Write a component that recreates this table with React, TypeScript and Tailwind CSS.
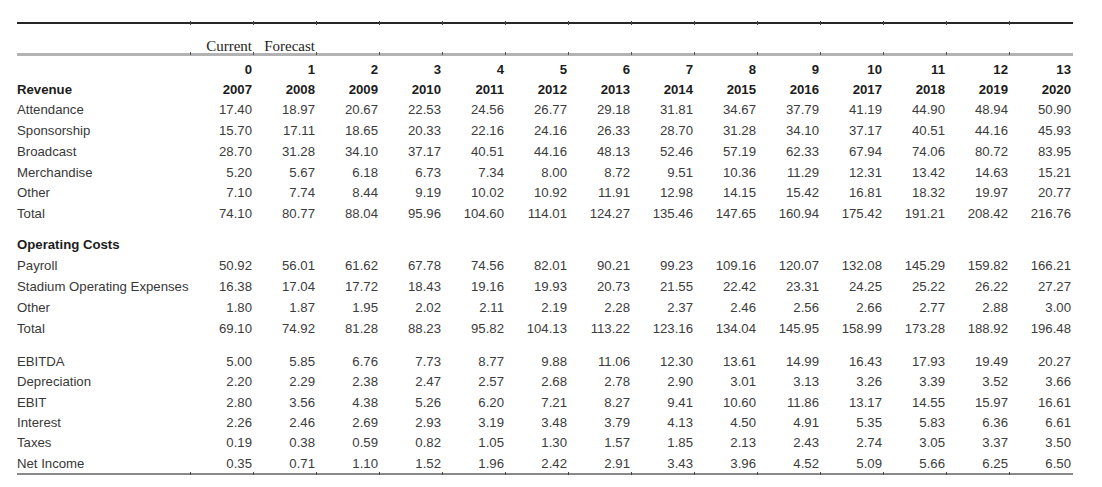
import React from "react"

const GRID = "grid grid-cols-[174px_repeat(14,63px)]"

type Row = { label: string; values: string[] }

const revenue: Row[] = [
  { label: "Attendance", values: ["17.40", "18.97", "20.67", "22.53", "24.56", "26.77", "29.18", "31.81", "34.67", "37.79", "41.19", "44.90", "48.94", "50.90"] },
  { label: "Sponsorship", values: ["15.70", "17.11", "18.65", "20.33", "22.16", "24.16", "26.33", "28.70", "31.28", "34.10", "37.17", "40.51", "44.16", "45.93"] },
  { label: "Broadcast", values: ["28.70", "31.28", "34.10", "37.17", "40.51", "44.16", "48.13", "52.46", "57.19", "62.33", "67.94", "74.06", "80.72", "83.95"] },
  { label: "Merchandise", values: ["5.20", "5.67", "6.18", "6.73", "7.34", "8.00", "8.72", "9.51", "10.36", "11.29", "12.31", "13.42", "14.63", "15.21"] },
  { label: "Other", values: ["7.10", "7.74", "8.44", "9.19", "10.02", "10.92", "11.91", "12.98", "14.15", "15.42", "16.81", "18.32", "19.97", "20.77"] },
  { label: "Total", values: ["74.10", "80.77", "88.04", "95.96", "104.60", "114.01", "124.27", "135.46", "147.65", "160.94", "175.42", "191.21", "208.42", "216.76"] },
]

const costs: Row[] = [
  { label: "Payroll", values: ["50.92", "56.01", "61.62", "67.78", "74.56", "82.01", "90.21", "99.23", "109.16", "120.07", "132.08", "145.29", "159.82", "166.21"] },
  { label: "Stadium Operating Expenses", values: ["16.38", "17.04", "17.72", "18.43", "19.16", "19.93", "20.73", "21.55", "22.42", "23.31", "24.25", "25.22", "26.22", "27.27"] },
  { label: "Other", values: ["1.80", "1.87", "1.95", "2.02", "2.11", "2.19", "2.28", "2.37", "2.46", "2.56", "2.66", "2.77", "2.88", "3.00"] },
  { label: "Total", values: ["69.10", "74.92", "81.28", "88.23", "95.82", "104.13", "113.22", "123.16", "134.04", "145.95", "158.99", "173.28", "188.92", "196.48"] },
]

const income: Row[] = [
  { label: "EBITDA", values: ["5.00", "5.85", "6.76", "7.73", "8.77", "9.88", "11.06", "12.30", "13.61", "14.99", "16.43", "17.93", "19.49", "20.27"] },
  { label: "Depreciation", values: ["2.20", "2.29", "2.38", "2.47", "2.57", "2.68", "2.78", "2.90", "3.01", "3.13", "3.26", "3.39", "3.52", "3.66"] },
  { label: "EBIT", values: ["2.80", "3.56", "4.38", "5.26", "6.20", "7.21", "8.27", "9.41", "10.60", "11.86", "13.17", "14.55", "15.97", "16.61"] },
  { label: "Interest", values: ["2.26", "2.46", "2.69", "2.93", "3.19", "3.48", "3.79", "4.13", "4.50", "4.91", "5.35", "5.83", "6.36", "6.61"] },
  { label: "Taxes", values: ["0.19", "0.38", "0.59", "0.82", "1.05", "1.30", "1.57", "1.85", "2.13", "2.43", "2.74", "3.05", "3.37", "3.50"] },
  { label: "Net Income", values: ["0.35", "0.71", "1.10", "1.52", "1.96", "2.42", "2.91", "3.43", "3.96", "4.52", "5.09", "5.66", "6.25", "6.50"] },
]

const periods = Array.from({ length: 14 }, (_, i) => String(i))
const years = Array.from({ length: 14 }, (_, i) => String(2007 + i))

// horizontal rule with little tick marks at each column boundary
function Rule({ line, tick }: { line: string; tick: string }) {
  return (
    <div className={GRID}>
      {Array.from({ length: 15 }, (_, i) => (
        <div key={i} className={`relative ${line}`}>
          {i < 14 && <span className={`absolute right-0 w-px ${tick}`} />}
        </div>
      ))}
    </div>
  )
}

function DataRow({ row, height, bold }: { row: Row; height: string; bold?: boolean }) {
  return (
    <div className={`${GRID} ${height} items-center`}>
      <div className={bold ? "font-bold text-[#1c1c1c]" : "text-[#383838]"}>{row.label}</div>
      {row.values.map((v, i) => (
        <div key={i} className={`text-right pr-[2px] ${bold ? "font-bold text-[#1c1c1c]" : "text-[#3c3c3c]"}`}>
          {v}
        </div>
      ))}
    </div>
  )
}

export default function App() {
  return (
    <div className="w-[1102px] h-[487px] bg-white pt-[22px] pl-[17px] font-['Liberation_Sans',Arial,sans-serif] text-[13.2px] leading-none">
      <Rule line="h-[2px] bg-[#262626]" tick="top-[-1px] bottom-[-1px] bg-[#444]" />
      {/* Current / Forecast band */}
      <div className={`${GRID} h-[29px] items-end font-['Liberation_Serif','Times_New_Roman',serif] text-[15px] leading-[14px] text-[#1e1e1e]`}>
        <div />
        <div className="text-right pr-[2px]">Current</div>
        <div className="text-right pr-[2px]">Forecast</div>
      </div>
      <Rule line="h-[3px] bg-[#b3b3b3]" tick="top-[-1px] h-[3px] bg-[#555]" />
      <div className="h-[3.5px]" />
      <div className={`${GRID} h-[20px] items-center font-bold text-[#1c1c1c]`}>
        <div />
        {periods.map((p) => (
          <div key={p} className="text-right pr-[2px]">{p}</div>
        ))}
      </div>
      <div className={`${GRID} h-[20px] items-center font-bold text-[#1c1c1c]`}>
        <div>Revenue</div>
        {years.map((y) => (
          <div key={y} className="text-right pr-[2px]">{y}</div>
        ))}
      </div>
      {revenue.map((r, i) => (
        <DataRow key={i} row={r} height="h-[20.8px]" />
      ))}
      <div className="h-[10.3px]" />
      <div className="h-[21px] flex items-center font-bold text-[#1c1c1c]">Operating Costs</div>
      {costs.map((r, i) => (
        <DataRow key={i} row={r} height="h-[21px]" />
      ))}
      <div className="h-[12px]" />
      {income.map((r, i) => (
        <DataRow key={i} row={r} height="h-[20.3px]" />
      ))}
      <Rule line="h-[2px] bg-[#8a8a8a]" tick="top-[-1px] h-[3px] bg-[#444]" />
    </div>
  )
}
